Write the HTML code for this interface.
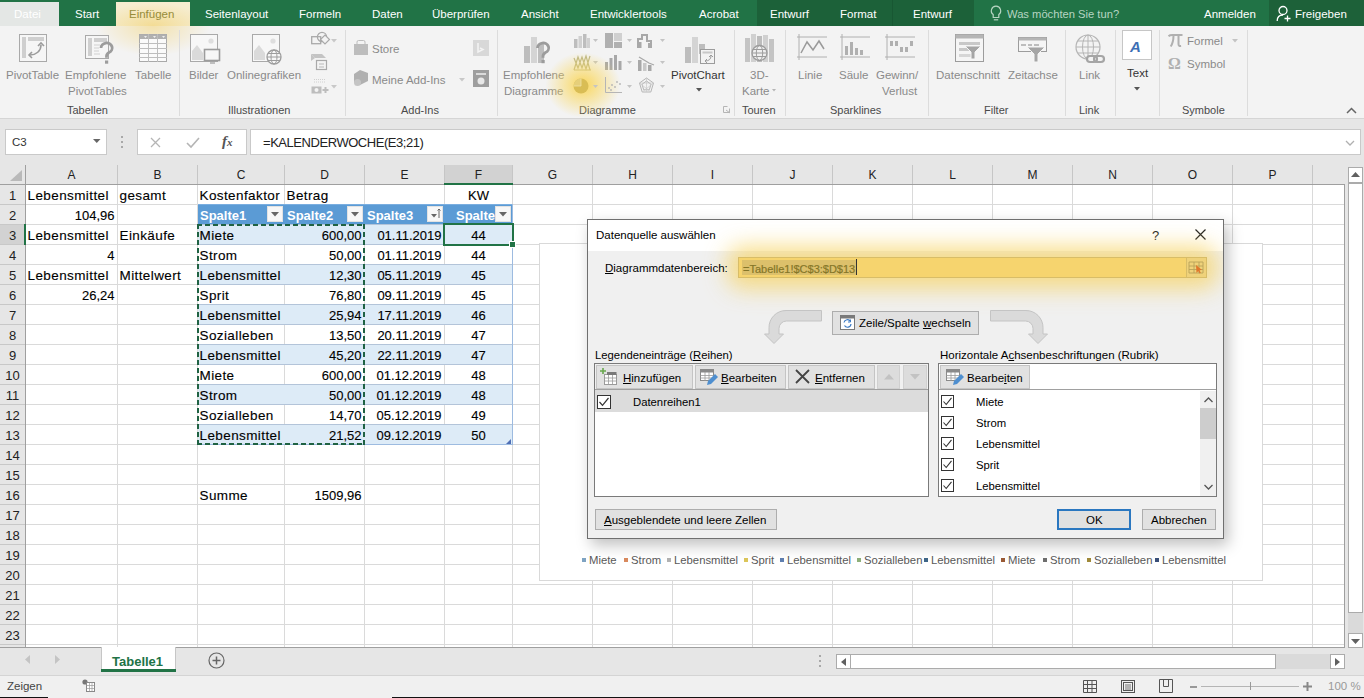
<!DOCTYPE html><html><head><meta charset="utf-8"><style>
*{box-sizing:border-box;margin:0;padding:0}
html,body{width:1364px;height:698px;overflow:hidden;background:#e6e6e6;font-family:"Liberation Sans",sans-serif;position:relative}
.a{position:absolute}
.t{position:absolute;white-space:nowrap;line-height:1}
svg{position:absolute;overflow:visible}
u{text-decoration:underline;text-underline-offset:1px}
</style></head><body>
<div class="a" style="left:0px;top:0px;width:1364px;height:26px;background:#217346"></div>
<div class="a" style="left:757px;top:0px;width:217px;height:26px;background:#1c6139"></div>
<div class="a" style="left:892px;top:0px;width:1px;height:26px;background:#185733"></div>
<div class="a" style="left:0px;top:2px;width:59px;height:24px;background:#e4e7e5"></div>
<div class="t" style="left:14px;top:9.17px;font-size:11.5px;color:#fff;">Datei</div>
<div class="t" style="left:75px;top:9.17px;font-size:11.5px;color:#fff;">Start</div>
<div class="a" style="left:116px;top:2px;width:74px;height:25px;background:radial-gradient(ellipse 75% 90% at 50% 95%,#f3dc95,#f6edd0 100%)"></div>
<div class="t" style="left:129px;top:9.17px;font-size:11.5px;color:#978c3a;">Einfügen</div>
<div class="t" style="left:205px;top:9.17px;font-size:11.5px;color:#fff;">Seitenlayout</div>
<div class="t" style="left:299px;top:9.17px;font-size:11.5px;color:#fff;">Formeln</div>
<div class="t" style="left:372px;top:9.17px;font-size:11.5px;color:#fff;">Daten</div>
<div class="t" style="left:432px;top:9.17px;font-size:11.5px;color:#fff;">Überprüfen</div>
<div class="t" style="left:521px;top:9.17px;font-size:11.5px;color:#fff;">Ansicht</div>
<div class="t" style="left:590px;top:9.17px;font-size:11.5px;color:#fff;">Entwicklertools</div>
<div class="t" style="left:699px;top:9.17px;font-size:11.5px;color:#fff;">Acrobat</div>
<div class="t" style="left:770px;top:9.17px;font-size:11.5px;color:#fff;">Entwurf</div>
<div class="t" style="left:840px;top:9.17px;font-size:11.5px;color:#fff;">Format</div>
<div class="t" style="left:913px;top:9.17px;font-size:11.5px;color:#fff;">Entwurf</div>
<svg style="left:990px;top:5px" width="12" height="17" viewBox="0 0 12 17"><path d="M6 1.2a4.6 4.6 0 0 0-2.8 8.3V12.5h5.6V9.5A4.6 4.6 0 0 0 6 1.2z" fill="none" stroke="#b7d5c2" stroke-width="1.2"/><path d="M3.8 14.8h4.4" stroke="#b7d5c2" stroke-width="1.2"/></svg>
<div class="t" style="left:1007px;top:9.42px;font-size:11.2px;color:#b7d5c2;">Was möchten Sie tun?</div>
<div class="t" style="left:1204px;top:9.17px;font-size:11.5px;color:#fff;">Anmelden</div>
<div class="a" style="left:1269px;top:0px;width:95px;height:26px;background:#1d6139"></div>
<svg style="left:1276px;top:5px" width="16" height="17" viewBox="0 0 16 17"><circle cx="7" cy="5.5" r="4" fill="none" stroke="#fff" stroke-width="1.3"/><path d="M1.2 16c0-3.8 2.5-6 5.8-6" fill="none" stroke="#fff" stroke-width="1.3"/><path d="M11.5 10.5v6M8.5 13.5h6" stroke="#fff" stroke-width="1.3"/></svg>
<div class="t" style="left:1295px;top:9.17px;font-size:11.5px;color:#fff;">Freigeben</div>
<div class="a" style="left:0px;top:26px;width:1364px;height:92px;background:#f3f3f3"></div>
<div class="a" style="left:0px;top:118px;width:1364px;height:1px;background:#d5d5d5"></div>
<div class="a" style="left:96px;top:26px;width:114px;height:30px;background:radial-gradient(ellipse 50% 100% at 50% 0%,rgba(243,220,150,.75),rgba(243,220,150,0) 100%)"></div>
<div class="a" style="left:179px;top:30px;width:1px;height:86px;background:#dcdcdc"></div>
<div class="a" style="left:345px;top:30px;width:1px;height:86px;background:#dcdcdc"></div>
<div class="a" style="left:497px;top:30px;width:1px;height:86px;background:#dcdcdc"></div>
<div class="a" style="left:734px;top:30px;width:1px;height:86px;background:#dcdcdc"></div>
<div class="a" style="left:785px;top:30px;width:1px;height:86px;background:#dcdcdc"></div>
<div class="a" style="left:928px;top:30px;width:1px;height:86px;background:#dcdcdc"></div>
<div class="a" style="left:1065px;top:30px;width:1px;height:86px;background:#dcdcdc"></div>
<div class="a" style="left:1115px;top:30px;width:1px;height:86px;background:#dcdcdc"></div>
<div class="a" style="left:1159px;top:30px;width:1px;height:86px;background:#dcdcdc"></div>
<div class="a" style="left:1247px;top:30px;width:1px;height:86px;background:#dcdcdc"></div>
<div class="t" style="left:67px;top:105.09px;font-size:11px;color:#4a4a4a;">Tabellen</div>
<div class="t" style="left:228px;top:105.09px;font-size:11px;color:#4a4a4a;">Illustrationen</div>
<div class="t" style="left:401px;top:105.09px;font-size:11px;color:#4a4a4a;">Add-Ins</div>
<div class="t" style="left:579px;top:105.09px;font-size:11px;color:#4a4a4a;">Diagramme</div>
<div class="t" style="left:742px;top:105.09px;font-size:11px;color:#4a4a4a;">Touren</div>
<div class="t" style="left:830px;top:105.09px;font-size:11px;color:#4a4a4a;">Sparklines</div>
<div class="t" style="left:984px;top:105.09px;font-size:11px;color:#4a4a4a;">Filter</div>
<div class="t" style="left:1079px;top:105.09px;font-size:11px;color:#4a4a4a;">Link</div>
<div class="t" style="left:1182px;top:105.09px;font-size:11px;color:#4a4a4a;">Symbole</div>
<div class="t" style="left:6px;top:69.87px;font-size:11.5px;color:#8a8a8a;">PivotTable</div>
<div class="t" style="left:65px;top:69.87px;font-size:11.5px;color:#8a8a8a;">Empfohlene</div>
<div class="t" style="left:68px;top:85.77px;font-size:11.5px;color:#8a8a8a;">PivotTables</div>
<div class="t" style="left:135px;top:69.87px;font-size:11.5px;color:#8a8a8a;">Tabelle</div>
<div class="t" style="left:189px;top:69.87px;font-size:11.5px;color:#8a8a8a;">Bilder</div>
<div class="t" style="left:227px;top:69.87px;font-size:11.5px;color:#8a8a8a;">Onlinegrafiken</div>
<div class="t" style="left:372px;top:43.67px;font-size:11.5px;color:#8a8a8a;">Store</div>
<div class="t" style="left:372px;top:74.67px;font-size:11.5px;color:#8a8a8a;">Meine Add-Ins</div>
<div class="t" style="left:503px;top:69.87px;font-size:11.5px;color:#8a8a8a;">Empfohlene</div>
<div class="t" style="left:504px;top:85.77px;font-size:11.5px;color:#8a8a8a;">Diagramme</div>
<div class="t" style="left:750px;top:69.87px;font-size:11.5px;color:#8a8a8a;">3D-</div>
<div class="t" style="left:742px;top:85.77px;font-size:11.5px;color:#8a8a8a;">Karte</div>
<div class="t" style="left:798px;top:69.87px;font-size:11.5px;color:#8a8a8a;">Linie</div>
<div class="t" style="left:839px;top:69.87px;font-size:11.5px;color:#8a8a8a;">Säule</div>
<div class="t" style="left:876px;top:69.87px;font-size:11.5px;color:#8a8a8a;">Gewinn/</div>
<div class="t" style="left:882px;top:85.77px;font-size:11.5px;color:#8a8a8a;">Verlust</div>
<div class="t" style="left:936px;top:69.87px;font-size:11.5px;color:#8a8a8a;">Datenschnitt</div>
<div class="t" style="left:1008px;top:69.87px;font-size:11.5px;color:#8a8a8a;">Zeitachse</div>
<div class="t" style="left:1079px;top:69.87px;font-size:11.5px;color:#8a8a8a;">Link</div>
<div class="t" style="left:1187px;top:35.77px;font-size:11.5px;color:#8a8a8a;">Formel</div>
<div class="t" style="left:1187px;top:58.87px;font-size:11.5px;color:#8a8a8a;">Symbol</div>
<div class="t" style="left:671px;top:69.87px;font-size:11.5px;color:#333;">PivotChart</div>
<div class="t" style="left:1127px;top:68.17px;font-size:11.5px;color:#333;">Text</div>
<svg style="left:19px;top:34px" width="28" height="28" viewBox="0 0 28 28"><rect x="0.5" y="0.5" width="27" height="27" fill="#f6f6f6" stroke="#a9a9a9"/><rect x="3" y="3" width="4" height="21" fill="#cfcfcf"/><rect x="9" y="3" width="16" height="4" fill="#cfcfcf"/><path d="M11 21c6 0 11-4 11-10" fill="none" stroke="#9c9c9c" stroke-width="1.6"/><path d="M19 12l3-3 3 3M13 18l-3 3 3 3" fill="none" stroke="#9c9c9c" stroke-width="1.6"/></svg>
<svg style="left:85px;top:35px" width="28" height="30" viewBox="0 0 28 30"><rect x="0.5" y="0.5" width="23" height="23" fill="#f6f6f6" stroke="#a9a9a9"/><rect x="3" y="3" width="4" height="18" fill="#cfcfcf"/><rect x="9" y="3" width="13" height="4" fill="#cfcfcf"/><path d="M9 10h6M9 13h5M9 16h5M9 19h6" stroke="#cfcfcf" stroke-width="1.2"/><path d="M16 13a5.6 5 0 1 1 8 4.5c-1.8 1-2.5 1.8-2.5 3.8v1.5" fill="none" stroke="#9c9c9c" stroke-width="2.8"/><rect x="20" y="25.5" width="3.2" height="3.2" fill="#9c9c9c"/></svg>
<svg style="left:139px;top:34px" width="28" height="28" viewBox="0 0 28 28"><rect x="0.5" y="0.5" width="27" height="27" fill="#fafafa" stroke="#a9a9a9"/><rect x="0.5" y="0.5" width="27" height="4.5" fill="#b0b0b0"/><path d="M9.5 0v28M18.5 0v28M0 9.5h28M0 14.5h28M0 19.5h28M0 23.5h28" stroke="#bdbdbd" stroke-width="1"/><path d="M5 2h3l-1.5 2zM14 2h3l-1.5 2zM23 2h3l-1.5 2z" fill="#eee"/></svg>
<svg style="left:190px;top:34px" width="32" height="31" viewBox="0 0 32 31"><rect x="0.5" y="0.5" width="27" height="27" fill="#f7f7f7" stroke="#a9a9a9"/><path d="M2 26V17l5-6 6 8v7z" fill="#dadada"/><circle cx="21" cy="7" r="2.6" fill="#dedede"/><rect x="14.5" y="15.5" width="15" height="11" fill="#f7f7f7" stroke="#9c9c9c" stroke-width="1.6"/><path d="M20 29h5" stroke="#9c9c9c" stroke-width="1.2"/></svg>
<svg style="left:252px;top:34px" width="32" height="32" viewBox="0 0 32 32"><rect x="0.5" y="0.5" width="27" height="27" fill="#f7f7f7" stroke="#a9a9a9"/><path d="M2 26V17l5-6 6 8v7z" fill="#dadada"/><circle cx="21" cy="7" r="2.6" fill="#dedede"/><circle cx="22" cy="23" r="7" fill="#f7f7f7" stroke="#9c9c9c" stroke-width="1.3"/><ellipse cx="22" cy="23" rx="3" ry="7" fill="none" stroke="#9c9c9c" stroke-width="1"/><path d="M15 23h14M16 19.5h12M16 26.5h12" stroke="#9c9c9c" stroke-width="1"/></svg>
<svg style="left:311px;top:32px" width="24" height="16" viewBox="0 0 24 16"><rect x="0.7" y="4.7" width="9" height="7" fill="none" stroke="#a9a9a9" stroke-width="1.3"/><circle cx="11" cy="5" r="4.6" fill="none" stroke="#a9a9a9" stroke-width="1.2"/><path d="M9.5 7.5l4.5-4.5 4.5 4.5-4.5 4.5z" fill="#f3f3f3" stroke="#a9a9a9" stroke-width="1.2"/><path d="M20 7h6l-3 3.5z" fill="#c8c8c8"/></svg>
<svg style="left:311px;top:54px" width="18" height="17" viewBox="0 0 18 17"><path d="M0 0h11l4 4H4z" fill="#c4c4c4"/><path d="M0 0v7l4-3z" fill="#c4c4c4"/><rect x="5.5" y="6.5" width="10" height="9" fill="#f3f3f3" stroke="#a9a9a9" stroke-width="1.2"/><path d="M8 10h5M8 13h5" stroke="#a9a9a9" stroke-width="0.8"/></svg>
<svg style="left:311px;top:79px" width="24" height="15" viewBox="0 0 24 15"><path d="M3 0.5h12M3 3h12" stroke="#d0d0d0" stroke-dasharray="1 1"/><rect x="0.5" y="7.5" width="10" height="7" fill="#bdbdbd"/><circle cx="5.5" cy="11" r="2" fill="#f3f3f3"/><path d="M14.5 8v6M11.5 11h6" stroke="#bdbdbd" stroke-width="2"/><path d="M20 6h6l-3 3.5z" fill="#c8c8c8"/></svg>
<svg style="left:354px;top:40px" width="15" height="15" viewBox="0 0 15 15"><path d="M0 4h14v11H0z" fill="#bdbdbd"/><path d="M3 4V2a1.5 1.5 0 0 1 1.5-1.5h5A1.5 1.5 0 0 1 11 2v2" fill="none" stroke="#bdbdbd"/></svg>
<svg style="left:354px;top:70px" width="15" height="17" viewBox="0 0 15 17"><path d="M6 0l8 3v8l-8 4-6-3V4z" fill="#b0b0b0"/><circle cx="3.5" cy="12.5" r="3.5" fill="#c4c4c4"/></svg>
<svg style="left:459px;top:78px" width="7" height="4" viewBox="0 0 7 4"><path d="M0 0h6l-3 3.5z" fill="#c8c8c8"/></svg>
<div class="a" style="left:473px;top:40px;width:16px;height:16px;background:#d8d8d8"></div>
<svg style="left:473px;top:40px" width="16" height="16" viewBox="0 0 16 16"><path d="M5 3v9l5-2.5-3-1.5" fill="none" stroke="#f3f3f3" stroke-width="1.5"/></svg>
<div class="a" style="left:473px;top:70px;width:16px;height:17px;background:#9e9e9e"></div>
<svg style="left:473px;top:70px" width="16" height="17" viewBox="0 0 16 17"><rect x="3" y="3" width="10" height="2" fill="#dadada"/><circle cx="8" cy="11" r="3.5" fill="#e8e8e8"/></svg>
<svg style="left:522px;top:35px" width="30" height="30" viewBox="0 0 30 30"><rect x="2" y="11" width="6" height="17" fill="#bdbdbd"/><rect x="9" y="2" width="6" height="26" fill="#d4d4d4"/><rect x="16" y="9" width="6" height="19" fill="#bdbdbd"/><path d="M15.5 13a5.6 5 0 1 1 8 4.5c-1.8 1-2.5 1.8-2.5 3.8v1.5" fill="none" stroke="#9c9c9c" stroke-width="2.8"/><rect x="19.5" y="25" width="3.2" height="3.2" fill="#9c9c9c"/></svg>
<svg style="left:574px;top:33px" width="16" height="15" viewBox="0 0 16 15"><rect x="0" y="6" width="3.5" height="9" fill="#bdbdbd"/><rect x="4.5" y="3" width="3.5" height="12" fill="#d0d0d0"/><rect x="9" y="1" width="3.5" height="14" fill="#bdbdbd"/><rect x="13" y="5" width="3" height="10" fill="#d0d0d0"/></svg>
<svg style="left:593px;top:39px" width="6" height="4" viewBox="0 0 6 4"><path d="M0 0h5l-2.5 3z" fill="#c4c4c4"/></svg>
<svg style="left:605px;top:33px" width="17" height="15" viewBox="0 0 17 15"><rect x="0" y="0" width="8" height="15" fill="#b0b0b0"/><rect x="9" y="0" width="8" height="8" fill="#d0d0d0"/><rect x="9" y="9" width="8" height="6" fill="#b0b0b0"/></svg>
<svg style="left:627px;top:39px" width="6" height="4" viewBox="0 0 6 4"><path d="M0 0h5l-2.5 3z" fill="#c4c4c4"/></svg>
<svg style="left:638px;top:33px" width="17" height="15" viewBox="0 0 17 15"><path d="M0 15V6h4V2h5v6h4v7" fill="none" stroke="#a8a8a8" stroke-width="2"/><rect x="1" y="9" width="2.5" height="6" fill="#a8a8a8"/><rect x="10" y="10" width="2.5" height="5" fill="#a8a8a8"/></svg>
<svg style="left:660px;top:39px" width="6" height="4" viewBox="0 0 6 4"><path d="M0 0h5l-2.5 3z" fill="#c4c4c4"/></svg>
<svg style="left:574px;top:55px" width="17" height="16" viewBox="0 0 17 16"><path d="M0 15l4-13 4 11 4-12 4 14M0 3l4 10 4-11 4 12 4-13" fill="none" stroke="#b8b58a" stroke-width="1.2"/><path d="M0 15h17" stroke="#b8b58a"/></svg>
<svg style="left:593px;top:61px" width="6" height="4" viewBox="0 0 6 4"><path d="M0 0h5l-2.5 3z" fill="#c4c4c4"/></svg>
<svg style="left:605px;top:55px" width="17" height="15" viewBox="0 0 17 15"><rect x="0" y="7" width="3" height="8" fill="#a8a8a8"/><rect x="4.5" y="3" width="3" height="12" fill="#a8a8a8"/><rect x="9" y="0" width="3" height="15" fill="#a8a8a8"/><rect x="13.5" y="6" width="3" height="9" fill="#a8a8a8"/></svg>
<svg style="left:627px;top:61px" width="6" height="4" viewBox="0 0 6 4"><path d="M0 0h5l-2.5 3z" fill="#c4c4c4"/></svg>
<svg style="left:638px;top:55px" width="17" height="16" viewBox="0 0 17 16"><rect x="0" y="5" width="3.5" height="11" fill="#a8a8a8"/><rect x="5" y="8" width="3.5" height="8" fill="#c8c8c8"/><rect x="10" y="10" width="3.5" height="6" fill="#a8a8a8"/><path d="M1 2l5 3 5 3 5 2" fill="none" stroke="#a8a8a8" stroke-width="1.3"/></svg>
<svg style="left:660px;top:61px" width="6" height="4" viewBox="0 0 6 4"><path d="M0 0h5l-2.5 3z" fill="#c4c4c4"/></svg>
<div class="a" style="left:545px;top:52px;width:76px;height:66px;background:radial-gradient(ellipse at center,rgba(250,210,70,.85) 0%,rgba(250,215,90,.55) 30%,rgba(250,225,120,0) 70%)"></div>
<svg style="left:573px;top:78px" width="16" height="16" viewBox="0 0 16 16"><circle cx="8" cy="8" r="7.5" fill="#d9bd55"/><path d="M8 8V0.5A7.5 7.5 0 0 0 0.5 8z" fill="#e6cf7a"/><path d="M8 8h-7.5M8 8V.5" stroke="#f0e3a8" stroke-width="0.8"/></svg>
<svg style="left:593px;top:85px" width="6" height="4" viewBox="0 0 6 4"><path d="M0 0h5l-2.5 3z" fill="#c4c4c4"/></svg>
<svg style="left:605px;top:77px" width="17" height="16" viewBox="0 0 17 16"><path d="M0.5 0v15.5H17" fill="none" stroke="#b5b5b5"/><circle cx="4" cy="11" r="0.9" fill="#b5b5b5"/><circle cx="7" cy="8" r="0.9" fill="#b5b5b5"/><circle cx="10" cy="10" r="0.9" fill="#b5b5b5"/><circle cx="12" cy="5" r="0.9" fill="#b5b5b5"/><circle cx="15" cy="7" r="0.9" fill="#b5b5b5"/><circle cx="6" cy="13" r="0.9" fill="#b5b5b5"/></svg>
<svg style="left:627px;top:85px" width="6" height="4" viewBox="0 0 6 4"><path d="M0 0h5l-2.5 3z" fill="#c4c4c4"/></svg>
<svg style="left:638px;top:77px" width="17" height="17" viewBox="0 0 17 17"><path d="M8.5 1l7 5-2.7 9H4.2L1.5 6z" fill="none" stroke="#b5b5b5"/><path d="M8.5 4l4.5 3.3-1.7 5.5H5.7L4 7.3z" fill="none" stroke="#b5b5b5"/><path d="M8.5 1v14M1.5 6l14 0M4.2 15L15.5 6M12.8 15L1.5 6" stroke="#c8c8c8" stroke-width="0.7"/></svg>
<svg style="left:660px;top:85px" width="6" height="4" viewBox="0 0 6 4"><path d="M0 0h5l-2.5 3z" fill="#c4c4c4"/></svg>
<svg style="left:685px;top:35px" width="32" height="30" viewBox="0 0 32 30"><rect x="0" y="12" width="6" height="16" fill="#bdbdbd"/><rect x="7" y="2" width="6" height="26" fill="#d4d4d4"/><rect x="14" y="9" width="6" height="10" fill="#bdbdbd"/><rect x="15.5" y="14.5" width="14" height="14" fill="#f3f3f3" stroke="#9c9c9c"/><rect x="17.5" y="16.5" width="10" height="2" fill="#c8c8c8"/><path d="M20 26c4 0 6-2 6-5M24 22l2-2 2 2M22 24l-2 2 2 2" fill="none" stroke="#9c9c9c" stroke-width="1"/></svg>
<svg style="left:696px;top:88px" width="7" height="4" viewBox="0 0 7 4"><path d="M0 0h6l-3 3.5z" fill="#555"/></svg>
<div class="a" style="left:725px;top:104px;width:1px;height:1px;"></div>
<svg style="left:723px;top:106px" width="8" height="8" viewBox="0 0 8 8"><path d="M0.5 0.5h4M0.5 0.5v6h6v-4M3 4l4 3" fill="none" stroke="#b5b5b5"/></svg>
<svg style="left:745px;top:34px" width="30" height="28" viewBox="0 0 30 28"><rect x="0" y="4" width="5" height="24" fill="#c4c4c4"/><rect x="6" y="0" width="5" height="28" fill="#d0d0d0"/><rect x="12" y="2" width="5" height="26" fill="#bdbdbd"/><rect x="18" y="1" width="5" height="27" fill="#d0d0d0"/><rect x="24" y="5" width="5" height="23" fill="#c4c4c4"/><circle cx="14.5" cy="19" r="7.5" fill="#efefef" stroke="#9c9c9c" stroke-width="1.3"/><ellipse cx="14.5" cy="19" rx="3.2" ry="7.5" fill="none" stroke="#9c9c9c" stroke-width="1"/><path d="M7 19h15M8 15.5h13M8 22.5h13" stroke="#9c9c9c" stroke-width="1"/></svg>
<svg style="left:772px;top:89px" width="5" height="3" viewBox="0 0 5 3"><path d="M0 0h4l-2 2.5z" fill="#b5b5b5"/></svg>
<svg style="left:797px;top:34px" width="30" height="26" viewBox="0 0 30 26"><path d="M2 0v26M0 23h30M0 3h30" stroke="#b0b0b0" stroke-width="1"/><path d="M4 19l6-11 6 8 6-9 5 8" fill="none" stroke="#9a9a9a" stroke-width="1.5"/></svg>
<svg style="left:840px;top:34px" width="30" height="26" viewBox="0 0 30 26"><path d="M2 0v26M0 23h30M0 3h30" stroke="#b0b0b0" stroke-width="1"/><rect x="5" y="12" width="3" height="9" fill="#b0b0b0"/><rect x="10" y="8" width="3" height="13" fill="#b0b0b0"/><rect x="15" y="14" width="3" height="7" fill="#b0b0b0"/><rect x="20" y="16" width="3" height="5" fill="#b0b0b0"/></svg>
<svg style="left:885px;top:34px" width="30" height="26" viewBox="0 0 30 26"><path d="M2 0v26M0 23h30M0 3h30" stroke="#b0b0b0" stroke-width="1"/><rect x="5" y="7" width="3" height="5" fill="#b0b0b0"/><rect x="10" y="7" width="3" height="5" fill="#b0b0b0"/><rect x="15" y="13" width="3" height="5" fill="#b0b0b0"/><rect x="20" y="13" width="3" height="5" fill="#b0b0b0"/><rect x="25" y="7" width="3" height="5" fill="#b0b0b0"/></svg>
<svg style="left:955px;top:34px" width="29" height="28" viewBox="0 0 29 28"><rect x="0.5" y="0.5" width="28" height="27" fill="#f5f5f5" stroke="#9c9c9c"/><rect x="0.5" y="0.5" width="28" height="4" fill="#b5b5b5"/><rect x="4" y="8" width="21" height="3" fill="#c8c8c8"/><rect x="4" y="14" width="12" height="3" fill="#c8c8c8"/><rect x="4" y="20" width="12" height="3" fill="#d6d6d6"/><path d="M10 12h16l-6 6v7h-4v-7z" fill="#a5a5a5" stroke="#f5f5f5"/></svg>
<svg style="left:1018px;top:37px" width="29" height="27" viewBox="0 0 29 27"><rect x="0.5" y="0.5" width="28" height="14" fill="#f5f5f5" stroke="#9c9c9c"/><rect x="0.5" y="0.5" width="28" height="3" fill="#b5b5b5"/><path d="M3 8h5M10 8h4M16 8h5" stroke="#bdbdbd" stroke-width="2"/><path d="M9 10h18l-7 7v8h-4v-8z" fill="#a5a5a5" stroke="#f5f5f5"/></svg>
<svg style="left:1075px;top:34px" width="32" height="31" viewBox="0 0 32 31"><circle cx="13" cy="13" r="12" fill="none" stroke="#b5b5b5" stroke-width="1.2"/><ellipse cx="13" cy="13" rx="5.5" ry="12" fill="none" stroke="#b5b5b5" stroke-width="1"/><path d="M1 13h24M3 7h20M3 19h20M13 1v24" stroke="#b5b5b5" stroke-width="1"/><rect x="12" y="22" width="10" height="6" rx="3" fill="#f3f3f3" stroke="#a5a5a5" stroke-width="2.2"/><rect x="19" y="22" width="10" height="6" rx="3" fill="none" stroke="#a5a5a5" stroke-width="2.2"/></svg>
<div class="a" style="left:1122px;top:30px;width:30px;height:30px;background:#fff;border:1px solid #c6c6c6"></div>
<div class="t" style="left:1130px;top:38.70px;font-size:15px;color:#3d6fb5;font-weight:bold"><i>A</i></div>
<svg style="left:1134px;top:87px" width="7" height="4" viewBox="0 0 7 4"><path d="M0 0h6l-3 3.5z" fill="#555"/></svg>
<svg style="left:1168px;top:34px" width="15" height="13" viewBox="0 0 15 13"><path d="M0.5 2.2C2 .8 3.5 .9 5 1h9.5" fill="none" stroke="#b0b0b0" stroke-width="2"/><path d="M5.5 1.5c0 4-.8 8-2.8 11M10.5 1.5v8.5c0 1.6.8 2.2 2.6 2" fill="none" stroke="#b0b0b0" stroke-width="2"/></svg>
<svg style="left:1232px;top:39px" width="7" height="4" viewBox="0 0 7 4"><path d="M0 0h6l-3 3.5z" fill="#c4c4c4"/></svg>
<div class="t" style="left:1168px;top:56.36px;font-size:16px;color:#b0b0b0;font-weight:bold;font-family:Liberation Serif">Ω</div>
<svg style="left:1346px;top:107px" width="11" height="7" viewBox="0 0 11 7"><path d="M1 6l4.5-4.5L10 6" fill="none" stroke="#666" stroke-width="1.5"/></svg>
<div class="a" style="left:0px;top:119px;width:1364px;height:46px;background:#e6e6e6"></div>
<div class="a" style="left:5px;top:129px;width:102px;height:26px;background:#fff;border:1px solid #c9c9c9"></div>
<div class="t" style="left:12px;top:136.77px;font-size:11.5px;color:#333;">C3</div>
<svg style="left:93px;top:139px" width="8" height="5" viewBox="0 0 8 5"><path d="M0 0h7.5l-3.75 4z" fill="#666"/></svg>
<div class="a" style="left:121px;top:136px;width:2px;height:2px;background:#a8a8a8"></div>
<div class="a" style="left:121px;top:141px;width:2px;height:2px;background:#a8a8a8"></div>
<div class="a" style="left:121px;top:146px;width:2px;height:2px;background:#a8a8a8"></div>
<div class="a" style="left:137px;top:129px;width:110px;height:26px;background:#fff;border:1px solid #c9c9c9"></div>
<svg style="left:150px;top:137px" width="11" height="11" viewBox="0 0 11 11"><path d="M1 1l9 9M10 1l-9 9" stroke="#b5b5b5" stroke-width="1.3"/></svg>
<svg style="left:186px;top:137px" width="14" height="11" viewBox="0 0 14 11"><path d="M1 6l4 4 8-9" fill="none" stroke="#b5b5b5" stroke-width="1.6"/></svg>
<div class="t" style="left:222px;top:133.80px;font-size:15px;color:#555;font-family:Liberation Serif;font-weight:bold"><i>f</i></div>
<div class="t" style="left:227px;top:137.19px;font-size:11px;color:#555;font-family:Liberation Serif;font-weight:bold"><i>x</i></div>
<div class="a" style="left:250px;top:129px;width:1111px;height:26px;background:#fff;border:1px solid #c9c9c9"></div>
<div class="t" style="left:263px;top:136.00px;font-size:13px;color:#222;letter-spacing:-0.45px">=KALENDERWOCHE(E3;21)</div>
<svg style="left:1345px;top:140px" width="10" height="6" viewBox="0 0 10 6"><path d="M1 1l4 4 4-4" fill="none" stroke="#b0b0b0" stroke-width="1.3"/></svg>
<div class="a" style="left:0px;top:165px;width:1345px;height:20px;background:#e6e6e6"></div>
<div class="a" style="left:444px;top:165px;width:69px;height:20px;background:#d2d2d2"></div>
<div class="a" style="left:26px;top:185px;width:1318px;height:462px;background:#fff"></div>
<div class="a" style="left:26px;top:204px;width:1318px;height:1px;background:#dadada"></div>
<div class="a" style="left:0px;top:204px;width:25px;height:1px;background:#c8c8c8"></div>
<div class="a" style="left:26px;top:224px;width:1318px;height:1px;background:#dadada"></div>
<div class="a" style="left:0px;top:224px;width:25px;height:1px;background:#c8c8c8"></div>
<div class="a" style="left:26px;top:244px;width:1318px;height:1px;background:#dadada"></div>
<div class="a" style="left:0px;top:244px;width:25px;height:1px;background:#c8c8c8"></div>
<div class="a" style="left:26px;top:264px;width:1318px;height:1px;background:#dadada"></div>
<div class="a" style="left:0px;top:264px;width:25px;height:1px;background:#c8c8c8"></div>
<div class="a" style="left:26px;top:284px;width:1318px;height:1px;background:#dadada"></div>
<div class="a" style="left:0px;top:284px;width:25px;height:1px;background:#c8c8c8"></div>
<div class="a" style="left:26px;top:304px;width:1318px;height:1px;background:#dadada"></div>
<div class="a" style="left:0px;top:304px;width:25px;height:1px;background:#c8c8c8"></div>
<div class="a" style="left:26px;top:324px;width:1318px;height:1px;background:#dadada"></div>
<div class="a" style="left:0px;top:324px;width:25px;height:1px;background:#c8c8c8"></div>
<div class="a" style="left:26px;top:344px;width:1318px;height:1px;background:#dadada"></div>
<div class="a" style="left:0px;top:344px;width:25px;height:1px;background:#c8c8c8"></div>
<div class="a" style="left:26px;top:364px;width:1318px;height:1px;background:#dadada"></div>
<div class="a" style="left:0px;top:364px;width:25px;height:1px;background:#c8c8c8"></div>
<div class="a" style="left:26px;top:384px;width:1318px;height:1px;background:#dadada"></div>
<div class="a" style="left:0px;top:384px;width:25px;height:1px;background:#c8c8c8"></div>
<div class="a" style="left:26px;top:404px;width:1318px;height:1px;background:#dadada"></div>
<div class="a" style="left:0px;top:404px;width:25px;height:1px;background:#c8c8c8"></div>
<div class="a" style="left:26px;top:424px;width:1318px;height:1px;background:#dadada"></div>
<div class="a" style="left:0px;top:424px;width:25px;height:1px;background:#c8c8c8"></div>
<div class="a" style="left:26px;top:444px;width:1318px;height:1px;background:#dadada"></div>
<div class="a" style="left:0px;top:444px;width:25px;height:1px;background:#c8c8c8"></div>
<div class="a" style="left:26px;top:464px;width:1318px;height:1px;background:#dadada"></div>
<div class="a" style="left:0px;top:464px;width:25px;height:1px;background:#c8c8c8"></div>
<div class="a" style="left:26px;top:484px;width:1318px;height:1px;background:#dadada"></div>
<div class="a" style="left:0px;top:484px;width:25px;height:1px;background:#c8c8c8"></div>
<div class="a" style="left:26px;top:504px;width:1318px;height:1px;background:#dadada"></div>
<div class="a" style="left:0px;top:504px;width:25px;height:1px;background:#c8c8c8"></div>
<div class="a" style="left:26px;top:524px;width:1318px;height:1px;background:#dadada"></div>
<div class="a" style="left:0px;top:524px;width:25px;height:1px;background:#c8c8c8"></div>
<div class="a" style="left:26px;top:544px;width:1318px;height:1px;background:#dadada"></div>
<div class="a" style="left:0px;top:544px;width:25px;height:1px;background:#c8c8c8"></div>
<div class="a" style="left:26px;top:564px;width:1318px;height:1px;background:#dadada"></div>
<div class="a" style="left:0px;top:564px;width:25px;height:1px;background:#c8c8c8"></div>
<div class="a" style="left:26px;top:584px;width:1318px;height:1px;background:#dadada"></div>
<div class="a" style="left:0px;top:584px;width:25px;height:1px;background:#c8c8c8"></div>
<div class="a" style="left:26px;top:604px;width:1318px;height:1px;background:#dadada"></div>
<div class="a" style="left:0px;top:604px;width:25px;height:1px;background:#c8c8c8"></div>
<div class="a" style="left:26px;top:624px;width:1318px;height:1px;background:#dadada"></div>
<div class="a" style="left:0px;top:624px;width:25px;height:1px;background:#c8c8c8"></div>
<div class="a" style="left:26px;top:644px;width:1318px;height:1px;background:#dadada"></div>
<div class="a" style="left:0px;top:644px;width:25px;height:1px;background:#c8c8c8"></div>
<div class="a" style="left:117px;top:185px;width:1px;height:462px;background:#dadada"></div>
<div class="a" style="left:117px;top:165px;width:1px;height:19px;background:#c6c6c6"></div>
<div class="a" style="left:197px;top:185px;width:1px;height:462px;background:#dadada"></div>
<div class="a" style="left:197px;top:165px;width:1px;height:19px;background:#c6c6c6"></div>
<div class="a" style="left:284px;top:185px;width:1px;height:462px;background:#dadada"></div>
<div class="a" style="left:284px;top:165px;width:1px;height:19px;background:#c6c6c6"></div>
<div class="a" style="left:364px;top:185px;width:1px;height:462px;background:#dadada"></div>
<div class="a" style="left:364px;top:165px;width:1px;height:19px;background:#c6c6c6"></div>
<div class="a" style="left:444px;top:185px;width:1px;height:462px;background:#dadada"></div>
<div class="a" style="left:444px;top:165px;width:1px;height:19px;background:#c6c6c6"></div>
<div class="a" style="left:512px;top:185px;width:1px;height:462px;background:#dadada"></div>
<div class="a" style="left:512px;top:165px;width:1px;height:19px;background:#c6c6c6"></div>
<div class="a" style="left:592px;top:185px;width:1px;height:462px;background:#dadada"></div>
<div class="a" style="left:592px;top:165px;width:1px;height:19px;background:#c6c6c6"></div>
<div class="a" style="left:672px;top:185px;width:1px;height:462px;background:#dadada"></div>
<div class="a" style="left:672px;top:165px;width:1px;height:19px;background:#c6c6c6"></div>
<div class="a" style="left:752px;top:185px;width:1px;height:462px;background:#dadada"></div>
<div class="a" style="left:752px;top:165px;width:1px;height:19px;background:#c6c6c6"></div>
<div class="a" style="left:832px;top:185px;width:1px;height:462px;background:#dadada"></div>
<div class="a" style="left:832px;top:165px;width:1px;height:19px;background:#c6c6c6"></div>
<div class="a" style="left:912px;top:185px;width:1px;height:462px;background:#dadada"></div>
<div class="a" style="left:912px;top:165px;width:1px;height:19px;background:#c6c6c6"></div>
<div class="a" style="left:992px;top:185px;width:1px;height:462px;background:#dadada"></div>
<div class="a" style="left:992px;top:165px;width:1px;height:19px;background:#c6c6c6"></div>
<div class="a" style="left:1072px;top:185px;width:1px;height:462px;background:#dadada"></div>
<div class="a" style="left:1072px;top:165px;width:1px;height:19px;background:#c6c6c6"></div>
<div class="a" style="left:1152px;top:185px;width:1px;height:462px;background:#dadada"></div>
<div class="a" style="left:1152px;top:165px;width:1px;height:19px;background:#c6c6c6"></div>
<div class="a" style="left:1232px;top:185px;width:1px;height:462px;background:#dadada"></div>
<div class="a" style="left:1232px;top:165px;width:1px;height:19px;background:#c6c6c6"></div>
<div class="a" style="left:1312px;top:185px;width:1px;height:462px;background:#dadada"></div>
<div class="a" style="left:1312px;top:165px;width:1px;height:19px;background:#c6c6c6"></div>
<div class="a" style="left:25px;top:165px;width:1px;height:482px;background:#9f9f9f"></div>
<div class="a" style="left:0px;top:184px;width:1345px;height:1px;background:#9f9f9f"></div>
<div class="a" style="left:444px;top:183px;width:69px;height:2px;background:#217346"></div>
<div class="a" style="left:1344px;top:185px;width:1px;height:463px;background:#9f9f9f"></div>
<div class="a" style="left:0px;top:647px;width:1345px;height:1px;background:#9f9f9f"></div>
<div class="t" style="left:-78.5px;width:300px;text-align:center;top:168.74px;font-size:12px;color:#222;">A</div>
<div class="t" style="left:7.5px;width:300px;text-align:center;top:168.74px;font-size:12px;color:#222;">B</div>
<div class="t" style="left:91.0px;width:300px;text-align:center;top:168.74px;font-size:12px;color:#222;">C</div>
<div class="t" style="left:174.5px;width:300px;text-align:center;top:168.74px;font-size:12px;color:#222;">D</div>
<div class="t" style="left:254.5px;width:300px;text-align:center;top:168.74px;font-size:12px;color:#222;">E</div>
<div class="t" style="left:328.5px;width:300px;text-align:center;top:168.74px;font-size:12px;color:#222;">F</div>
<div class="t" style="left:402.5px;width:300px;text-align:center;top:168.74px;font-size:12px;color:#222;">G</div>
<div class="t" style="left:482.5px;width:300px;text-align:center;top:168.74px;font-size:12px;color:#222;">H</div>
<div class="t" style="left:562.5px;width:300px;text-align:center;top:168.74px;font-size:12px;color:#222;">I</div>
<div class="t" style="left:642.5px;width:300px;text-align:center;top:168.74px;font-size:12px;color:#222;">J</div>
<div class="t" style="left:722.5px;width:300px;text-align:center;top:168.74px;font-size:12px;color:#222;">K</div>
<div class="t" style="left:802.5px;width:300px;text-align:center;top:168.74px;font-size:12px;color:#222;">L</div>
<div class="t" style="left:882.5px;width:300px;text-align:center;top:168.74px;font-size:12px;color:#222;">M</div>
<div class="t" style="left:962.5px;width:300px;text-align:center;top:168.74px;font-size:12px;color:#222;">N</div>
<div class="t" style="left:1042.5px;width:300px;text-align:center;top:168.74px;font-size:12px;color:#222;">O</div>
<div class="t" style="left:1122.5px;width:300px;text-align:center;top:168.74px;font-size:12px;color:#222;">P</div>
<svg style="left:9px;top:170px" width="14" height="12" viewBox="0 0 14 12"><path d="M13 0v11H1z" fill="#b9b9b9"/></svg>
<div class="a" style="left:0px;top:225px;width:25px;height:19px;background:#d2d2d2"></div>
<div class="a" style="left:24px;top:224px;width:2px;height:21px;background:#217346"></div>
<div class="t" style="left:-137.5px;width:300px;text-align:center;top:188.80px;font-size:13px;color:#222;">1</div>
<div class="t" style="left:-137.5px;width:300px;text-align:center;top:208.80px;font-size:13px;color:#222;">2</div>
<div class="t" style="left:-137.5px;width:300px;text-align:center;top:228.80px;font-size:13px;color:#222;">3</div>
<div class="t" style="left:-137.5px;width:300px;text-align:center;top:248.80px;font-size:13px;color:#222;">4</div>
<div class="t" style="left:-137.5px;width:300px;text-align:center;top:268.80px;font-size:13px;color:#222;">5</div>
<div class="t" style="left:-137.5px;width:300px;text-align:center;top:288.80px;font-size:13px;color:#222;">6</div>
<div class="t" style="left:-137.5px;width:300px;text-align:center;top:308.80px;font-size:13px;color:#222;">7</div>
<div class="t" style="left:-137.5px;width:300px;text-align:center;top:328.80px;font-size:13px;color:#222;">8</div>
<div class="t" style="left:-137.5px;width:300px;text-align:center;top:348.80px;font-size:13px;color:#222;">9</div>
<div class="t" style="left:-137.5px;width:300px;text-align:center;top:368.80px;font-size:13px;color:#222;">10</div>
<div class="t" style="left:-137.5px;width:300px;text-align:center;top:388.80px;font-size:13px;color:#222;">11</div>
<div class="t" style="left:-137.5px;width:300px;text-align:center;top:408.80px;font-size:13px;color:#222;">12</div>
<div class="t" style="left:-137.5px;width:300px;text-align:center;top:428.80px;font-size:13px;color:#222;">13</div>
<div class="t" style="left:-137.5px;width:300px;text-align:center;top:448.80px;font-size:13px;color:#222;">14</div>
<div class="t" style="left:-137.5px;width:300px;text-align:center;top:468.80px;font-size:13px;color:#222;">15</div>
<div class="t" style="left:-137.5px;width:300px;text-align:center;top:488.80px;font-size:13px;color:#222;">16</div>
<div class="t" style="left:-137.5px;width:300px;text-align:center;top:508.80px;font-size:13px;color:#222;">17</div>
<div class="t" style="left:-137.5px;width:300px;text-align:center;top:528.80px;font-size:13px;color:#222;">18</div>
<div class="t" style="left:-137.5px;width:300px;text-align:center;top:548.80px;font-size:13px;color:#222;">19</div>
<div class="t" style="left:-137.5px;width:300px;text-align:center;top:568.80px;font-size:13px;color:#222;">20</div>
<div class="t" style="left:-137.5px;width:300px;text-align:center;top:588.80px;font-size:13px;color:#222;">21</div>
<div class="t" style="left:-137.5px;width:300px;text-align:center;top:608.80px;font-size:13px;color:#222;">22</div>
<div class="t" style="left:-137.5px;width:300px;text-align:center;top:628.80px;font-size:13px;color:#222;">23</div>
<div class="a" style="left:198px;top:225px;width:314px;height:19px;background:#ddebf7"></div>
<div class="a" style="left:198px;top:265px;width:314px;height:19px;background:#ddebf7"></div>
<div class="a" style="left:198px;top:305px;width:314px;height:19px;background:#ddebf7"></div>
<div class="a" style="left:198px;top:345px;width:314px;height:19px;background:#ddebf7"></div>
<div class="a" style="left:198px;top:385px;width:314px;height:19px;background:#ddebf7"></div>
<div class="a" style="left:198px;top:425px;width:314px;height:19px;background:#ddebf7"></div>
<div class="a" style="left:198px;top:224px;width:314px;height:1px;background:#b3c4d9"></div>
<div class="a" style="left:198px;top:244px;width:314px;height:1px;background:#b3c4d9"></div>
<div class="a" style="left:198px;top:264px;width:314px;height:1px;background:#b3c4d9"></div>
<div class="a" style="left:198px;top:284px;width:314px;height:1px;background:#b3c4d9"></div>
<div class="a" style="left:198px;top:304px;width:314px;height:1px;background:#b3c4d9"></div>
<div class="a" style="left:198px;top:324px;width:314px;height:1px;background:#b3c4d9"></div>
<div class="a" style="left:198px;top:344px;width:314px;height:1px;background:#b3c4d9"></div>
<div class="a" style="left:198px;top:364px;width:314px;height:1px;background:#b3c4d9"></div>
<div class="a" style="left:198px;top:384px;width:314px;height:1px;background:#b3c4d9"></div>
<div class="a" style="left:198px;top:404px;width:314px;height:1px;background:#b3c4d9"></div>
<div class="a" style="left:198px;top:424px;width:314px;height:1px;background:#b3c4d9"></div>
<div class="a" style="left:198px;top:444px;width:315px;height:1px;background:#9dbbe0"></div>
<div class="a" style="left:512px;top:204px;width:1px;height:241px;background:#9dbbe0"></div>
<div class="a" style="left:198px;top:205px;width:314px;height:19px;background:#5b9bd5"></div>
<div class="a" style="left:198px;top:204px;width:314px;height:1px;background:#7aaee0"></div>
<div class="t" style="left:200px;top:209.00px;font-size:13px;color:#fff;font-weight:bold">Spalte1</div>
<div class="t" style="left:287px;top:209.00px;font-size:13px;color:#fff;font-weight:bold">Spalte2</div>
<div class="t" style="left:367px;top:209.00px;font-size:13px;color:#fff;font-weight:bold">Spalte3</div>
<div class="t" style="left:456px;top:209.00px;font-size:13px;color:#fff;font-weight:bold">Spalte</div>
<div class="a" style="left:267px;top:206px;width:16px;height:16px;background:#f7f7f7;border:1px solid #e2e2e2"></div>
<div class="a" style="left:347px;top:206px;width:16px;height:16px;background:#f7f7f7;border:1px solid #e2e2e2"></div>
<div class="a" style="left:427px;top:206px;width:16px;height:16px;background:#f7f7f7;border:1px solid #e2e2e2"></div>
<div class="a" style="left:495px;top:206px;width:16px;height:16px;background:#f7f7f7;border:1px solid #e2e2e2"></div>
<svg style="left:271px;top:212px" width="9" height="5" viewBox="0 0 9 5"><path d="M0 0h8l-4 4.5z" fill="#666"/></svg>
<svg style="left:351px;top:212px" width="9" height="5" viewBox="0 0 9 5"><path d="M0 0h8l-4 4.5z" fill="#666"/></svg>
<svg style="left:499px;top:212px" width="9" height="5" viewBox="0 0 9 5"><path d="M0 0h8l-4 4.5z" fill="#666"/></svg>
<svg style="left:431px;top:209px" width="10" height="10" viewBox="0 0 10 10"><path d="M0 5h6l-3 3.5z" fill="#666"/><path d="M8 0v9M6.5 1.5L8 0l1.5 1.5" fill="none" stroke="#666" stroke-width="1"/></svg>
<div class="t" style="left:27.5px;top:189.37px;font-size:13.5px;color:#000;letter-spacing:0.4px;-webkit-text-stroke:0.12px #000">Lebensmittel</div>
<div class="t" style="left:119.5px;top:189.37px;font-size:13.5px;color:#000;letter-spacing:0.4px;-webkit-text-stroke:0.12px #000">gesamt</div>
<div class="t" style="left:199.5px;top:189.37px;font-size:13.5px;color:#000;letter-spacing:0.4px;-webkit-text-stroke:0.12px #000">Kostenfaktor</div>
<div class="t" style="left:286.5px;top:189.37px;font-size:13.5px;color:#000;letter-spacing:0.4px;-webkit-text-stroke:0.12px #000">Betrag</div>
<div class="t" style="left:328.5px;width:300px;text-align:center;top:189.00px;font-size:13px;color:#000;-webkit-text-stroke:0.12px #000">KW</div>
<div class="t" style="right:1249.5px;top:209.00px;font-size:13px;color:#000;-webkit-text-stroke:0.12px #000">104,96</div>
<div class="t" style="left:27.5px;top:229.37px;font-size:13.5px;color:#000;letter-spacing:0.4px;-webkit-text-stroke:0.12px #000">Lebensmittel</div>
<div class="t" style="left:119.5px;top:229.37px;font-size:13.5px;color:#000;letter-spacing:0.4px;-webkit-text-stroke:0.12px #000">Einkäufe</div>
<div class="t" style="right:1249.5px;top:249.00px;font-size:13px;color:#000;-webkit-text-stroke:0.12px #000">4</div>
<div class="t" style="left:27.5px;top:269.37px;font-size:13.5px;color:#000;letter-spacing:0.4px;-webkit-text-stroke:0.12px #000">Lebensmittel</div>
<div class="t" style="left:119.5px;top:269.37px;font-size:13.5px;color:#000;letter-spacing:0.4px;-webkit-text-stroke:0.12px #000">Mittelwert</div>
<div class="t" style="right:1249.5px;top:289.00px;font-size:13px;color:#000;-webkit-text-stroke:0.12px #000">26,24</div>
<div class="t" style="left:199.5px;top:229.37px;font-size:13.5px;color:#000;letter-spacing:0.4px;-webkit-text-stroke:0.12px #000">Miete</div>
<div class="t" style="right:1002.5px;top:229.00px;font-size:13px;color:#000;-webkit-text-stroke:0.12px #000">600,00</div>
<div class="t" style="right:922.5px;top:229.00px;font-size:13px;color:#000;-webkit-text-stroke:0.12px #000">01.11.2019</div>
<div class="t" style="left:328.5px;width:300px;text-align:center;top:229.00px;font-size:13px;color:#000;-webkit-text-stroke:0.12px #000">44</div>
<div class="t" style="left:199.5px;top:249.37px;font-size:13.5px;color:#000;letter-spacing:0.4px;-webkit-text-stroke:0.12px #000">Strom</div>
<div class="t" style="right:1002.5px;top:249.00px;font-size:13px;color:#000;-webkit-text-stroke:0.12px #000">50,00</div>
<div class="t" style="right:922.5px;top:249.00px;font-size:13px;color:#000;-webkit-text-stroke:0.12px #000">01.11.2019</div>
<div class="t" style="left:328.5px;width:300px;text-align:center;top:249.00px;font-size:13px;color:#000;-webkit-text-stroke:0.12px #000">44</div>
<div class="t" style="left:199.5px;top:269.37px;font-size:13.5px;color:#000;letter-spacing:0.4px;-webkit-text-stroke:0.12px #000">Lebensmittel</div>
<div class="t" style="right:1002.5px;top:269.00px;font-size:13px;color:#000;-webkit-text-stroke:0.12px #000">12,30</div>
<div class="t" style="right:922.5px;top:269.00px;font-size:13px;color:#000;-webkit-text-stroke:0.12px #000">05.11.2019</div>
<div class="t" style="left:328.5px;width:300px;text-align:center;top:269.00px;font-size:13px;color:#000;-webkit-text-stroke:0.12px #000">45</div>
<div class="t" style="left:199.5px;top:289.37px;font-size:13.5px;color:#000;letter-spacing:0.4px;-webkit-text-stroke:0.12px #000">Sprit</div>
<div class="t" style="right:1002.5px;top:289.00px;font-size:13px;color:#000;-webkit-text-stroke:0.12px #000">76,80</div>
<div class="t" style="right:922.5px;top:289.00px;font-size:13px;color:#000;-webkit-text-stroke:0.12px #000">09.11.2019</div>
<div class="t" style="left:328.5px;width:300px;text-align:center;top:289.00px;font-size:13px;color:#000;-webkit-text-stroke:0.12px #000">45</div>
<div class="t" style="left:199.5px;top:309.37px;font-size:13.5px;color:#000;letter-spacing:0.4px;-webkit-text-stroke:0.12px #000">Lebensmittel</div>
<div class="t" style="right:1002.5px;top:309.00px;font-size:13px;color:#000;-webkit-text-stroke:0.12px #000">25,94</div>
<div class="t" style="right:922.5px;top:309.00px;font-size:13px;color:#000;-webkit-text-stroke:0.12px #000">17.11.2019</div>
<div class="t" style="left:328.5px;width:300px;text-align:center;top:309.00px;font-size:13px;color:#000;-webkit-text-stroke:0.12px #000">46</div>
<div class="t" style="left:199.5px;top:329.37px;font-size:13.5px;color:#000;letter-spacing:0.4px;-webkit-text-stroke:0.12px #000">Sozialleben</div>
<div class="t" style="right:1002.5px;top:329.00px;font-size:13px;color:#000;-webkit-text-stroke:0.12px #000">13,50</div>
<div class="t" style="right:922.5px;top:329.00px;font-size:13px;color:#000;-webkit-text-stroke:0.12px #000">20.11.2019</div>
<div class="t" style="left:328.5px;width:300px;text-align:center;top:329.00px;font-size:13px;color:#000;-webkit-text-stroke:0.12px #000">47</div>
<div class="t" style="left:199.5px;top:349.37px;font-size:13.5px;color:#000;letter-spacing:0.4px;-webkit-text-stroke:0.12px #000">Lebensmittel</div>
<div class="t" style="right:1002.5px;top:349.00px;font-size:13px;color:#000;-webkit-text-stroke:0.12px #000">45,20</div>
<div class="t" style="right:922.5px;top:349.00px;font-size:13px;color:#000;-webkit-text-stroke:0.12px #000">22.11.2019</div>
<div class="t" style="left:328.5px;width:300px;text-align:center;top:349.00px;font-size:13px;color:#000;-webkit-text-stroke:0.12px #000">47</div>
<div class="t" style="left:199.5px;top:369.37px;font-size:13.5px;color:#000;letter-spacing:0.4px;-webkit-text-stroke:0.12px #000">Miete</div>
<div class="t" style="right:1002.5px;top:369.00px;font-size:13px;color:#000;-webkit-text-stroke:0.12px #000">600,00</div>
<div class="t" style="right:922.5px;top:369.00px;font-size:13px;color:#000;-webkit-text-stroke:0.12px #000">01.12.2019</div>
<div class="t" style="left:328.5px;width:300px;text-align:center;top:369.00px;font-size:13px;color:#000;-webkit-text-stroke:0.12px #000">48</div>
<div class="t" style="left:199.5px;top:389.37px;font-size:13.5px;color:#000;letter-spacing:0.4px;-webkit-text-stroke:0.12px #000">Strom</div>
<div class="t" style="right:1002.5px;top:389.00px;font-size:13px;color:#000;-webkit-text-stroke:0.12px #000">50,00</div>
<div class="t" style="right:922.5px;top:389.00px;font-size:13px;color:#000;-webkit-text-stroke:0.12px #000">01.12.2019</div>
<div class="t" style="left:328.5px;width:300px;text-align:center;top:389.00px;font-size:13px;color:#000;-webkit-text-stroke:0.12px #000">48</div>
<div class="t" style="left:199.5px;top:409.37px;font-size:13.5px;color:#000;letter-spacing:0.4px;-webkit-text-stroke:0.12px #000">Sozialleben</div>
<div class="t" style="right:1002.5px;top:409.00px;font-size:13px;color:#000;-webkit-text-stroke:0.12px #000">14,70</div>
<div class="t" style="right:922.5px;top:409.00px;font-size:13px;color:#000;-webkit-text-stroke:0.12px #000">05.12.2019</div>
<div class="t" style="left:328.5px;width:300px;text-align:center;top:409.00px;font-size:13px;color:#000;-webkit-text-stroke:0.12px #000">49</div>
<div class="t" style="left:199.5px;top:429.37px;font-size:13.5px;color:#000;letter-spacing:0.4px;-webkit-text-stroke:0.12px #000">Lebensmittel</div>
<div class="t" style="right:1002.5px;top:429.00px;font-size:13px;color:#000;-webkit-text-stroke:0.12px #000">21,52</div>
<div class="t" style="right:922.5px;top:429.00px;font-size:13px;color:#000;-webkit-text-stroke:0.12px #000">09.12.2019</div>
<div class="t" style="left:328.5px;width:300px;text-align:center;top:429.00px;font-size:13px;color:#000;-webkit-text-stroke:0.12px #000">50</div>
<div class="t" style="left:199.5px;top:489.37px;font-size:13.5px;color:#000;letter-spacing:0.4px;-webkit-text-stroke:0.12px #000">Summe</div>
<div class="t" style="right:1002.5px;top:489.00px;font-size:13px;color:#000;-webkit-text-stroke:0.12px #000">1509,96</div>
<div class="a" style="left:197px;top:224px;width:168px;height:2px;background:repeating-linear-gradient(90deg,#1f6243 0 5px,transparent 5px 8px)"></div>
<div class="a" style="left:197px;top:443px;width:168px;height:2px;background:repeating-linear-gradient(90deg,#1f6243 0 5px,transparent 5px 8px)"></div>
<div class="a" style="left:197px;top:224px;width:2px;height:221px;background:repeating-linear-gradient(180deg,#1f6243 0 5px,transparent 5px 8px)"></div>
<div class="a" style="left:363px;top:224px;width:2px;height:221px;background:repeating-linear-gradient(180deg,#1f6243 0 5px,transparent 5px 8px)"></div>
<div class="a" style="left:443px;top:223px;width:71px;height:23px;border:2px solid #217346"></div>
<div class="a" style="left:509px;top:241px;width:7px;height:7px;background:#217346;border:1px solid #fff"></div>
<svg style="left:506px;top:439px" width="6" height="6" viewBox="0 0 6 6"><path d="M5 0v5H0z" fill="#4f6fb5"/></svg>
<div class="a" style="left:539px;top:243px;width:724px;height:338px;background:#fff;border:1px solid #d9d9d9"></div>
<div class="a" style="left:582px;top:558px;width:4px;height:4px;background:#7ea3c2"></div>
<div class="t" style="left:589px;top:555.23px;font-size:11.3px;color:#595959;">Miete</div>
<div class="a" style="left:624px;top:558px;width:4px;height:4px;background:#d98a5e"></div>
<div class="t" style="left:631px;top:555.23px;font-size:11.3px;color:#595959;">Strom</div>
<div class="a" style="left:667px;top:558px;width:4px;height:4px;background:#b2b2b2"></div>
<div class="t" style="left:674px;top:555.23px;font-size:11.3px;color:#595959;">Lebensmittel</div>
<div class="a" style="left:744px;top:558px;width:4px;height:4px;background:#dcc65a"></div>
<div class="t" style="left:751px;top:555.23px;font-size:11.3px;color:#595959;">Sprit</div>
<div class="a" style="left:780px;top:558px;width:4px;height:4px;background:#5f7fb0"></div>
<div class="t" style="left:787px;top:555.23px;font-size:11.3px;color:#595959;">Lebensmittel</div>
<div class="a" style="left:857px;top:558px;width:4px;height:4px;background:#8fb07a"></div>
<div class="t" style="left:864px;top:555.23px;font-size:11.3px;color:#595959;">Sozialleben</div>
<div class="a" style="left:924px;top:558px;width:4px;height:4px;background:#3f6688"></div>
<div class="t" style="left:931px;top:555.23px;font-size:11.3px;color:#595959;">Lebensmittel</div>
<div class="a" style="left:1001px;top:558px;width:4px;height:4px;background:#9a5a35"></div>
<div class="t" style="left:1008px;top:555.23px;font-size:11.3px;color:#595959;">Miete</div>
<div class="a" style="left:1043px;top:558px;width:4px;height:4px;background:#6e6e6e"></div>
<div class="t" style="left:1050px;top:555.23px;font-size:11.3px;color:#595959;">Strom</div>
<div class="a" style="left:1087px;top:558px;width:4px;height:4px;background:#a08a3a"></div>
<div class="t" style="left:1094px;top:555.23px;font-size:11.3px;color:#595959;">Sozialleben</div>
<div class="a" style="left:1155px;top:558px;width:4px;height:4px;background:#3a4f78"></div>
<div class="t" style="left:1162px;top:555.23px;font-size:11.3px;color:#595959;">Lebensmittel</div>
<div class="a" style="left:587px;top:219px;width:637px;height:320px;background:#f0f0f0;border:1px solid #6f6f6f;box-shadow:4px 6px 14px rgba(0,0,0,.25)"></div>
<div class="a" style="left:588px;top:220px;width:635px;height:31px;background:#fff"></div>
<div class="t" style="left:596px;top:230.27px;font-size:11.5px;color:#000;">Datenquelle auswählen</div>
<div class="t" style="left:1152px;top:229.00px;font-size:13px;color:#222;">?</div>
<svg style="left:1195px;top:229px" width="11" height="11" viewBox="0 0 11 11"><path d="M0.5 0.5l10 10M10.5 0.5l-10 10" stroke="#222" stroke-width="1.2"/></svg>
<div class="a" style="left:588px;top:220px;width:635px;height:318px;overflow:hidden"><div class="a" style="left:150px;top:37px;width:469px;height:21px;box-shadow:0 0 22px 11px rgba(247,210,95,.72);border-radius:6px"></div></div>
<div class="a" style="left:588px;top:251px;width:635px;height:1px;background:rgba(240,240,240,.0)"></div>
<div class="t" style="left:605px;top:263.27px;font-size:11.5px;color:#000;"><u>D</u>iagrammdatenbereich:</div>
<div class="a" style="left:738px;top:257px;width:469px;height:21px;background:#f6d46e;border:1px solid #d8bd68"></div>
<div class="a" style="left:1186px;top:258px;width:20px;height:19px;background:#efd27a;border-left:1px solid #d8bd68"></div>
<svg style="left:1188px;top:261px" width="16" height="13" viewBox="0 0 16 13"><path d="M1 1h14v11H1zM1 5h14M1 8.5h14M6 1v11M11 1v11" fill="none" stroke="#b9a35a" stroke-width="0.9"/><path d="M8 4l6 5-2.5.3 1.3 2.5-1.2.6-1.3-2.5L8.5 12z" fill="#e0782c"/></svg>
<div class="a" style="left:742px;top:260px;width:114px;height:15px;background:#dcc06b"></div>
<div class="t" style="left:743px;top:263.69px;font-size:11px;color:#857628;-webkit-text-stroke:0.2px #857628">=Tabelle1!$C$3:$D$13</div>
<div class="a" style="left:856px;top:259px;width:1px;height:16px;background:#333"></div>
<div class="a" style="left:832px;top:311px;width:147px;height:24px;background:#e1e1e1;border:1px solid #adadad"></div>
<svg style="left:840px;top:315px" width="15" height="15" viewBox="0 0 15 15"><rect x="0.5" y="0.5" width="14" height="14" fill="#fff" stroke="#7a7a7a"/><rect x="0.5" y="0.5" width="14" height="3" fill="#7a7a7a"/><path d="M4 7.5a3.5 3.5 0 0 1 6.5-1M11 9a3.5 3.5 0 0 1-6.5 1.5" fill="none" stroke="#3d7bc4" stroke-width="1.2"/><path d="M10.5 4.5v2.5H8" fill="none" stroke="#3d7bc4"/></svg>
<div class="t" style="left:859px;top:318.27px;font-size:11.5px;color:#000;">Zeile/Spalte <u>w</u>echseln</div>
<svg style="left:764px;top:310px" width="58" height="34" viewBox="0 0 58 34"><path d="M57.5 0.5H22a17 17 0 0 0-17 17V24H0.5L10 33.5 19.5 24H15v-5.5a7.5 7.5 0 0 1 7.5-7.5H57.5z" fill="#dadada" stroke="#c4c4c4"/></svg>
<svg style="left:990px;top:310px" width="58" height="34" viewBox="0 0 58 34"><path d="M0.5 0.5H36a17 17 0 0 1 17 17V24H57.5L48 33.5 38.5 24H43v-5.5a7.5 7.5 0 0 0-7.5-7.5H0.5z" fill="#dadada" stroke="#c4c4c4"/></svg>
<div class="t" style="left:595px;top:350.43px;font-size:11.3px;color:#000;">Legendeneinträge (<u>R</u>eihen)</div>
<div class="a" style="left:594px;top:363px;width:335px;height:134px;background:#fff;border:1px solid #7a7a7a"></div>
<div class="a" style="left:595px;top:364px;width:333px;height:26px;background:#f0f0f0"></div>
<div class="a" style="left:595px;top:389px;width:333px;height:1px;background:#a0a0a0"></div>
<div class="a" style="left:596px;top:365px;width:97px;height:24px;background:#e1e1e1;border:1px solid #c4c4c4"></div>
<div class="a" style="left:695px;top:365px;width:91px;height:24px;background:#e1e1e1;border:1px solid #c4c4c4"></div>
<div class="a" style="left:788px;top:365px;width:87px;height:24px;background:#e1e1e1;border:1px solid #c4c4c4"></div>
<div class="a" style="left:877px;top:365px;width:23px;height:24px;background:#dcdcdc;border:1px solid #d0d0d0"></div>
<div class="a" style="left:903px;top:365px;width:24px;height:24px;background:#dcdcdc;border:1px solid #d0d0d0"></div>
<svg style="left:884px;top:374px" width="10" height="6" viewBox="0 0 10 6"><path d="M0 5.5L5 0l5 5.5z" fill="#c2c2c2"/></svg>
<svg style="left:910px;top:374px" width="10" height="6" viewBox="0 0 10 6"><path d="M0 0l5 5.5L10 0z" fill="#c2c2c2"/></svg>
<svg style="left:600px;top:368px" width="18" height="18" viewBox="0 0 18 18"><path d="M3 0v6M0 3h6" stroke="#6aa84f" stroke-width="1.6"/><rect x="4.5" y="6.5" width="12" height="10" fill="#fff" stroke="#9a9a9a"/><rect x="7" y="4" width="9.5" height="3" fill="#7a7a7a"/><path d="M4.5 10h12M4.5 13h12M8.5 7v10M12.5 7v10" stroke="#9a9a9a" stroke-width="0.8"/></svg>
<div class="t" style="left:623px;top:373.27px;font-size:11.5px;color:#000;"><u>H</u>inzufügen</div>
<svg style="left:700px;top:368px" width="18" height="18" viewBox="0 0 18 18"><rect x="0.5" y="1.5" width="13" height="11" fill="#fff" stroke="#8a8a8a"/><rect x="0.5" y="1.5" width="13" height="3" fill="#8a8a8a"/><path d="M0.5 7.5h13M0.5 10h13M5 4v9M9 4v9" stroke="#9a9a9a" stroke-width="0.8"/><path d="M7 17l1-4 7-7 3 3-7 7z" fill="#4f8fd0"/></svg>
<div class="t" style="left:721px;top:373.27px;font-size:11.5px;color:#000;"><u>B</u>earbeiten</div>
<svg style="left:795px;top:369px" width="15" height="15" viewBox="0 0 15 15"><path d="M1 1l13 13M14 1L1 14" stroke="#444" stroke-width="1.8"/></svg>
<div class="t" style="left:815px;top:373.27px;font-size:11.5px;color:#000;"><u>E</u>ntfernen</div>
<div class="a" style="left:595px;top:390px;width:333px;height:22px;background:#dcdcdc"></div>
<div class="a" style="left:597px;top:395px;width:14px;height:14px;background:#fff;border:1px solid #333"></div>
<svg style="left:599px;top:397px" width="10" height="10" viewBox="0 0 10 10"><path d="M0.5 5l3 3.3L9.5 1" fill="none" stroke="#333" stroke-width="1.2"/></svg>
<div class="t" style="left:633px;top:397.43px;font-size:11.3px;color:#000;">Datenreihen1</div>
<div class="a" style="left:595px;top:509px;width:182px;height:21px;background:#e1e1e1;border:1px solid #adadad"></div>
<div class="t" style="left:604px;top:515.27px;font-size:11.5px;color:#000;"><u>A</u>usgeblendete und leere Zellen</div>
<div class="t" style="left:940px;top:350.27px;font-size:11.5px;color:#000;">Horizontale A<u>c</u>hsenbeschriftungen (Rubrik)</div>
<div class="a" style="left:938px;top:363px;width:279px;height:134px;background:#fff;border:1px solid #7a7a7a"></div>
<div class="a" style="left:939px;top:364px;width:277px;height:26px;background:#fff"></div>
<div class="a" style="left:939px;top:389px;width:277px;height:1px;background:#a0a0a0"></div>
<div class="a" style="left:940px;top:365px;width:90px;height:24px;background:#e1e1e1;border:1px solid #c4c4c4"></div>
<svg style="left:946px;top:368px" width="18" height="18" viewBox="0 0 18 18"><rect x="0.5" y="1.5" width="13" height="11" fill="#fff" stroke="#8a8a8a"/><rect x="0.5" y="1.5" width="13" height="3" fill="#8a8a8a"/><path d="M0.5 7.5h13M0.5 10h13M5 4v9M9 4v9" stroke="#9a9a9a" stroke-width="0.8"/><path d="M7 17l1-4 7-7 3 3-7 7z" fill="#4f8fd0"/></svg>
<div class="t" style="left:967px;top:373.27px;font-size:11.5px;color:#000;">Bearbe<u>i</u>ten</div>
<div class="a" style="left:941px;top:395.2px;width:13px;height:13px;background:#fff;border:1px solid #333"></div>
<svg style="left:943px;top:397.2px" width="9" height="9" viewBox="0 0 9 9"><path d="M0.5 4.5l2.7 3L8.5 0.8" fill="none" stroke="#333" stroke-width="1.1"/></svg>
<div class="t" style="left:976px;top:397.13px;font-size:11.3px;color:#000;">Miete</div>
<div class="a" style="left:941px;top:416.2px;width:13px;height:13px;background:#fff;border:1px solid #333"></div>
<svg style="left:943px;top:418.2px" width="9" height="9" viewBox="0 0 9 9"><path d="M0.5 4.5l2.7 3L8.5 0.8" fill="none" stroke="#333" stroke-width="1.1"/></svg>
<div class="t" style="left:976px;top:418.13px;font-size:11.3px;color:#000;">Strom</div>
<div class="a" style="left:941px;top:437.2px;width:13px;height:13px;background:#fff;border:1px solid #333"></div>
<svg style="left:943px;top:439.2px" width="9" height="9" viewBox="0 0 9 9"><path d="M0.5 4.5l2.7 3L8.5 0.8" fill="none" stroke="#333" stroke-width="1.1"/></svg>
<div class="t" style="left:976px;top:439.13px;font-size:11.3px;color:#000;">Lebensmittel</div>
<div class="a" style="left:941px;top:458.2px;width:13px;height:13px;background:#fff;border:1px solid #333"></div>
<svg style="left:943px;top:460.2px" width="9" height="9" viewBox="0 0 9 9"><path d="M0.5 4.5l2.7 3L8.5 0.8" fill="none" stroke="#333" stroke-width="1.1"/></svg>
<div class="t" style="left:976px;top:460.13px;font-size:11.3px;color:#000;">Sprit</div>
<div class="a" style="left:941px;top:479.2px;width:13px;height:13px;background:#fff;border:1px solid #333"></div>
<svg style="left:943px;top:481.2px" width="9" height="9" viewBox="0 0 9 9"><path d="M0.5 4.5l2.7 3L8.5 0.8" fill="none" stroke="#333" stroke-width="1.1"/></svg>
<div class="t" style="left:976px;top:481.13px;font-size:11.3px;color:#000;">Lebensmittel</div>
<div class="a" style="left:1200px;top:391px;width:16px;height:105px;background:#f0f0f0"></div>
<div class="a" style="left:1200px;top:408px;width:16px;height:31px;background:#cdcdcd"></div>
<svg style="left:1204px;top:397px" width="9" height="6" viewBox="0 0 9 6"><path d="M0.5 5L4.5 1l4 4" fill="none" stroke="#555" stroke-width="1.3"/></svg>
<svg style="left:1204px;top:484px" width="9" height="6" viewBox="0 0 9 6"><path d="M0.5 1l4 4 4-4" fill="none" stroke="#555" stroke-width="1.3"/></svg>
<div class="a" style="left:1057px;top:509px;width:74px;height:21px;background:#e1e1e1;border:2px solid #2a77c0"></div>
<div class="t" style="left:1086px;top:515.27px;font-size:11.5px;color:#000;">OK</div>
<div class="a" style="left:1142px;top:509px;width:74px;height:21px;background:#e1e1e1;border:1px solid #adadad"></div>
<div class="t" style="left:1151px;top:515.27px;font-size:11.5px;color:#000;">Abbrechen</div>
<div class="a" style="left:1345px;top:165px;width:19px;height:483px;background:#e6e6e6"></div>
<div class="a" style="left:1348px;top:167px;width:15px;height:481px;background:#dadada"></div>
<div class="a" style="left:1348px;top:167px;width:15px;height:16px;background:#fff;border:1px solid #ababab"></div>
<svg style="left:1351px;top:172px" width="9" height="5" viewBox="0 0 9 5"><path d="M0 5L4.5 0 9 5z" fill="#606060"/></svg>
<div class="a" style="left:1348px;top:183px;width:15px;height:430px;background:#fff;border:1px solid #ababab"></div>
<div class="a" style="left:1348px;top:633px;width:15px;height:15px;background:#fff;border:1px solid #ababab"></div>
<svg style="left:1351px;top:639px" width="9" height="5" viewBox="0 0 9 5"><path d="M0 0l4.5 5L9 0z" fill="#606060"/></svg>
<div class="a" style="left:0px;top:648px;width:1364px;height:27px;background:#e6e6e6"></div>
<svg style="left:25px;top:655px" width="6" height="9" viewBox="0 0 6 9"><path d="M5 0v9L0 4.5z" fill="#c4c4c4"/></svg>
<svg style="left:55px;top:655px" width="6" height="9" viewBox="0 0 6 9"><path d="M0 0v9l5-4.5z" fill="#c4c4c4"/></svg>
<div class="a" style="left:101px;top:647px;width:75px;height:24px;background:#fff;border-left:1px solid #c6c6c6;border-right:1px solid #c6c6c6"></div>
<div class="a" style="left:101px;top:669px;width:75px;height:3px;background:#217346"></div>
<div class="t" style="left:112px;top:654.50px;font-size:13px;color:#217346;font-weight:bold">Tabelle1</div>
<svg style="left:208px;top:652px" width="17" height="17" viewBox="0 0 17 17"><circle cx="8.5" cy="8.5" r="7.5" fill="none" stroke="#666" stroke-width="1.2"/><path d="M8.5 4.5v8M4.5 8.5h8" stroke="#666" stroke-width="1.5"/></svg>
<div class="a" style="left:819px;top:655px;width:2px;height:2px;background:#a8a8a8"></div>
<div class="a" style="left:819px;top:660px;width:2px;height:2px;background:#a8a8a8"></div>
<div class="a" style="left:819px;top:665px;width:2px;height:2px;background:#a8a8a8"></div>
<div class="a" style="left:836px;top:654px;width:509px;height:15px;background:#dadada"></div>
<div class="a" style="left:836px;top:654px;width:15px;height:15px;background:#fff;border:1px solid #ababab"></div>
<svg style="left:841px;top:658px" width="5" height="8" viewBox="0 0 5 8"><path d="M5 0v8L0 4z" fill="#606060"/></svg>
<div class="a" style="left:850px;top:654px;width:426px;height:15px;background:#fff;border:1px solid #ababab"></div>
<div class="a" style="left:1330px;top:654px;width:15px;height:15px;background:#fff;border:1px solid #ababab"></div>
<svg style="left:1335px;top:658px" width="5" height="8" viewBox="0 0 5 8"><path d="M0 0v8l5-4z" fill="#606060"/></svg>
<div class="a" style="left:0px;top:675px;width:1364px;height:23px;background:#f0f0f0;border-top:1px solid #d4d4d4"></div>
<div class="t" style="left:7px;top:681.27px;font-size:11.5px;color:#444;">Zeigen</div>
<svg style="left:82px;top:679px" width="13" height="13" viewBox="0 0 13 13"><circle cx="3" cy="3" r="2.6" fill="#777"/><rect x="4.5" y="3.5" width="8" height="9" fill="#fff" stroke="#888"/><path d="M4.5 6.5h8M4.5 9.5h8M7.5 3.5v9M10 3.5v9" stroke="#999" stroke-width="0.7"/></svg>
<svg style="left:1083px;top:680px" width="14" height="13" viewBox="0 0 14 13"><path d="M0.5 0.5h13v12h-13zM0.5 4.5h13M0.5 8.5h13M4.5 0.5v12M9 .5v12" fill="none" stroke="#555"/></svg>
<svg style="left:1121px;top:680px" width="14" height="13" viewBox="0 0 14 13"><rect x="0.5" y="0.5" width="13" height="12" fill="none" stroke="#555"/><rect x="2.5" y="2.5" width="9" height="8" fill="none" stroke="#555"/><path d="M4 5h6M4 7h6M4 9h6" stroke="#555" stroke-width=".8"/></svg>
<svg style="left:1159px;top:679px" width="14" height="14" viewBox="0 0 14 14"><path d="M0.5 0.5h13v13h-13z M4.5 0.5v7h5v-7" fill="none" stroke="#555"/></svg>
<div class="a" style="left:1190px;top:686px;width:7px;height:2px;background:#999"></div>
<div class="a" style="left:1201px;top:686px;width:98px;height:1px;background:#b5b5b5"></div>
<div class="a" style="left:1250px;top:682px;width:1px;height:8px;background:#999"></div>
<svg style="left:1303px;top:682px" width="9" height="9" viewBox="0 0 9 9"><path d="M4.5 0v9M0 4.5h9" stroke="#888" stroke-width="2"/></svg>
<div class="t" style="left:1328px;top:681.27px;font-size:11.5px;color:#999;">100 %</div>
<div class="a" style="left:0px;top:697px;width:48px;height:1px;background:#111"></div>
<div class="a" style="left:392px;top:697px;width:972px;height:1px;background:#111"></div>
</body></html>
